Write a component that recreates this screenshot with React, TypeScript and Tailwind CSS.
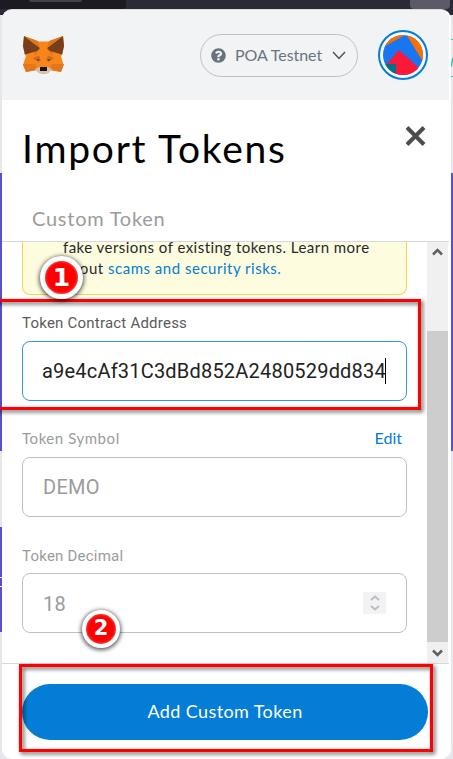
import type { ReactNode } from "react";

function Fox() {
  return (
    <svg className="ml-[21px] h-[38px] w-[41px]" viewBox="0 0 41 38">
      <path d="M1 0L15 5.500H26L40 0L41 10L39.500 18L38 20L40.500 29L38 36L28 34L25 37L21 38L16 37L13 34L3 36L0 29L3 20L1.500 18L0 10Z" fill="#f6851b" />
      <path d="M0 28L12 28L14 34L3 36ZM41 28L29 28L27 34L38 36ZM10 12L17 13L12 20ZM31 12L24 13L29 20Z" fill="#e4761b" />
      <path d="M1 0L17 12L14 15L2 18.500L0 10ZM40 0L24 12L27 15L39 18.500L41 10Z" fill="#763e1a" />
      <path d="M1 0L15 5L17 12ZM40 0L26 5L24 12Z" fill="#e2761b" />
      <path d="M10 22L16 19.500L18 25L12 24ZM31 22L25 19.500L23 25L29 24Z" fill="#d5691a" />
      <path d="M13.500 23L16.500 23.500L16 25.500L14 24.500ZM27.500 23L24.500 23.500L25 25.500L27 24.500Z" fill="#5c4a3b" />
      <path d="M12 33L17 31H24L29 33L25 37L21 38L16 37Z" fill="#d7c1b3" />
      <path d="M17 31H24V35H17Z" fill="#161616" />
    </svg>
  );
}

function Avatar() {
  return (
    <svg className="ml-5 h-[50px] w-[50px]" viewBox="0 0 50 50">
      <defs><clipPath id="face"><circle cx="25" cy="25" r="20" /></clipPath></defs>
      <circle cx="25" cy="25" r="24" fill="#f7f8f9" stroke="#037dd6" strokeWidth="2" />
      <g clipPath="url(#face)">
        <path d="M0 0H50V50H0Z" fill="#1876f2" />
        <path d="M0 20L27 5V0H0ZM28 4L50 40V0H28Z" fill="#fa7000" />
        <path d="M9 34L21 20L41 38L37 50H9Z" fill="#fb1838" />
        <path d="M0 34H18V50H0Z" fill="#017186" />
      </g>
    </svg>
  );
}

function Badge({ children, className }: { children: ReactNode; className: string }) {
  return (
    <div className={"absolute z-20 flex items-center justify-center rounded-full border-white bg-[#fe0000] font-['DejaVu_Sans'] font-bold text-white shadow-[0_1px_4px_1px_rgba(0,0,0,0.65),inset_0_0_3px_rgba(255,255,255,0.5)] " + className}>
      {children}
    </div>
  );
}

export default function App() {
  return (
    <div className="relative flex h-[759px] w-[453px] flex-col overflow-hidden bg-[#e6e6eb] font-[Lato,sans-serif]">
      <div className="absolute left-0 top-0 h-[15px] w-full bg-[#2b2a37]">
        <div className="h-[9px] w-[126px] rounded-br bg-[#1c1b22]" />
        <div className="absolute left-[29px] top-0 h-[2px] w-[53px] rounded-b bg-[#42414d]" />
        <div className="absolute left-[410px] top-0 h-[9px] w-10 rounded-b bg-[#5b5a66]" />
      </div>
      <div className="absolute left-0 top-[173px] h-[278px] w-full bg-[#5651cd]" />
      <div className="absolute left-0 top-[527px] h-[105px] w-1 bg-[#5651cd]" />
      <div className="absolute left-0 top-[577px] h-px w-1 bg-white" />
      <div className="absolute left-0 top-[586px] h-px w-1 bg-white" />
      <div className="absolute left-[451px] top-[39px] h-px w-[2px] bg-[#35c5a5]" />
      <div className="absolute left-[451px] top-[76px] h-px w-[2px] bg-[#35c5a5]" />
      <svg className="absolute left-[451px] top-[57px] h-[10px] w-[2px]" viewBox="0 0 2 10"><path d="M0 10L2 1" stroke="#35c5a5" strokeWidth="1.500" /></svg>

      <main className="relative ml-[2px] mt-[9px] flex h-[751px] w-[449px] flex-col overflow-hidden rounded-[10px] border-r-2 border-t border-r-white border-t-[#dcdde0] bg-white">
        <header className="flex h-[90px] shrink-0 items-center bg-[#f2f3f5]">
          <Fox />
          <div className="ml-[136px] flex h-[43px] w-[158px] items-center rounded-full border border-[#bbc0c5] text-[#6a737d]">
            <svg className="ml-[10px] h-[15px] w-[15px] shrink-0" viewBox="0 0 512 512" fill="currentColor"><path d="M504 256c0 136.997-111.043 248-248 248S8 392.997 8 256C8 119.083 119.043 8 256 8s248 111.083 248 248zM262.655 90c-54.497 0-89.255 22.957-116.549 63.758-3.536 5.286-2.353 12.415 2.715 16.258l34.699 26.310c5.205 3.947 12.621 3.008 16.665-2.122 17.864-22.658 30.113-35.797 57.303-35.797 20.429 0 45.698 13.148 45.698 32.958 0 14.976-12.363 22.667-32.534 33.976C247.128 238.528 216 254.941 216 296v4c0 6.627 5.373 12 12 12h56c6.627 0 12-5.373 12-12v-1.333c0-28.462 83.186-29.647 83.186-106.667 0-58.002-60.165-102-116.531-102zM256 338c-25.365 0-46 20.635-46 46 0 25.364 20.635 46 46 46s46-20.636 46-46c0-25.365-20.635-46-46-46z" /></svg>
            <span className="ml-[9px] w-[88px] whitespace-nowrap text-[16px] tracking-[-0.05px]">POA Testnet</span>
            <svg className="ml-[9px] h-[9px] w-[14px]" viewBox="0 0 14 9" fill="none" stroke="#4d5359" strokeWidth="1.500"><path d="M1 1L7 7.500L13 1" /></svg>
          </div>
          <Avatar />
        </header>

        <div className="flex h-[98px] shrink-0 items-center justify-between">
          <h1 className="-mt-[2px] ml-5 whitespace-nowrap text-[39px] leading-none tracking-[1.75px] text-black">Import Tokens</h1>
          <svg className="mb-[26px] mr-[23px] h-[20px] w-[21px]" viewBox="0 0 21 20" stroke="#4d4d4d" strokeWidth="4"><path d="M2 1.500L19 18.500M19 1.500L2 18.500" /></svg>
        </div>
        <div className="flex h-[44px] shrink-0 items-center border-b border-[#d6d9dc] pb-[3px]">
          <span className="ml-[30px] whitespace-nowrap text-[20px] tracking-[0.75px] text-[#9b9b9b]">Custom Token</span>
        </div>

        <section className="flex h-[421px] shrink-0">
          <div className="flex w-[425px] flex-col pl-5 pr-5">
            <div className="h-[53px] w-[385px] shrink-0 overflow-hidden rounded-b-lg border border-t-0 border-[#ffd33d] bg-[#fefcde] pl-10 text-[15px] leading-[21px] text-[#24292e]">
              <p className="-mt-[5px] whitespace-nowrap tracking-[0.46px]">fake versions of existing tokens. Learn more</p>
              <p className="whitespace-nowrap tracking-[0.51px]">about <span className="text-[#037dd6]">scams and security risks.</span></p>
            </div>
            <div className="mt-[17px] flex h-[22px] items-center whitespace-nowrap font-[Roboto] text-[15px] tracking-[0.22px] text-[#5b5b5b]">Token Contract Address</div>
            <div className="mt-[7px] flex h-[60px] w-[385px] shrink-0 items-center rounded-lg border border-[#3297df] pl-[19px] font-[Roboto] text-[20px] text-[#222]">
              <span className="whitespace-nowrap tracking-[0.2px]">a9e4cAf31C3dBd852A2480529dd834</span>
              <i className="-ml-px h-[26px] w-px shrink-0 bg-black" />
            </div>
            <div className="mt-[26px] flex h-[22px] w-[385px] items-center justify-between pr-[5px] text-[15px] text-[#9b9b9b]">
              <span className="tracking-[0.55px]">Token Symbol</span>
              <span className="text-[16px] text-[#037dd6]">Edit</span>
            </div>
            <div className="mt-[8px] flex h-[60px] w-[385px] shrink-0 items-center rounded-lg border border-[#bbc0c5] pl-5 font-[Roboto] text-[20px] tracking-[0.3px] text-[#9b9b9b]">DEMO</div>
            <div className="mt-[28px] flex h-[22px] items-center whitespace-nowrap font-[Roboto] text-[15px] tracking-[0.22px] text-[#9b9b9b]">Token Decimal</div>
            <div className="mt-[6px] flex h-[60px] w-[385px] shrink-0 items-center justify-between rounded-lg border border-[#bbc0c5] pl-5 pr-5 font-[Roboto] text-[20px] text-[#9b9b9b]">
              <span className="pt-px tracking-[0.3px]">18</span>
              <div className="flex h-[22px] w-[23px] items-center justify-center bg-[#f2f2f5]">
                <svg className="h-[16px] w-[10px]" viewBox="0 0 10 16" fill="none" stroke="#bcbcc2" strokeWidth="2"><path d="M1 5L5 1.500L9 5M1 11L5 14.500L9 11" /></svg>
              </div>
            </div>
          </div>
          <div className="flex h-full w-[21px] flex-col items-center bg-[#f0f0f0]">
            <div className="flex h-[89px] pt-[6px]"><svg className="h-[8px] w-[11px]" viewBox="0 0 11 8" fill="none" stroke="#606060" strokeWidth="2.500"><path d="M1 6.500L5.500 2L10 6.500" /></svg></div>
            <div className="h-[311px] w-full bg-[#cdcdcd]" />
            <svg className="mt-[7px] h-[8px] w-[11px]" viewBox="0 0 11 8" fill="none" stroke="#606060" strokeWidth="2.500"><path d="M1 1.500L5.500 6L10 1.500" /></svg>
          </div>
        </section>

        <footer className="flex flex-1 items-start border-t border-[#d6d9dc] pl-5 pt-5">
          <button className="h-[56px] w-[406px] rounded-full bg-[#037dd6] pb-[2px] text-[18px] tracking-[0.4px] text-white">Add Custom Token</button>
        </footer>
      </main>

      <div className="absolute -left-2 top-[299px] h-[111px] w-[429px] border-[3px] border-[#fe0000] drop-shadow-[2px_2px_2px_rgba(0,0,0,0.65)]" />
      <div className="absolute left-[19px] top-[664px] h-[88px] w-[414px] border-[3px] border-[#fe0000] drop-shadow-[2px_2px_2px_rgba(0,0,0,0.65)]" />
      <Badge className="left-[40px] top-[256px] h-[43px] w-[43px] border-[5px] text-[25px]">1</Badge>
      <Badge className="left-[82px] top-[610px] h-[38px] w-[38px] border-[4px] text-[21px]">2</Badge>
    </div>
  );
}
